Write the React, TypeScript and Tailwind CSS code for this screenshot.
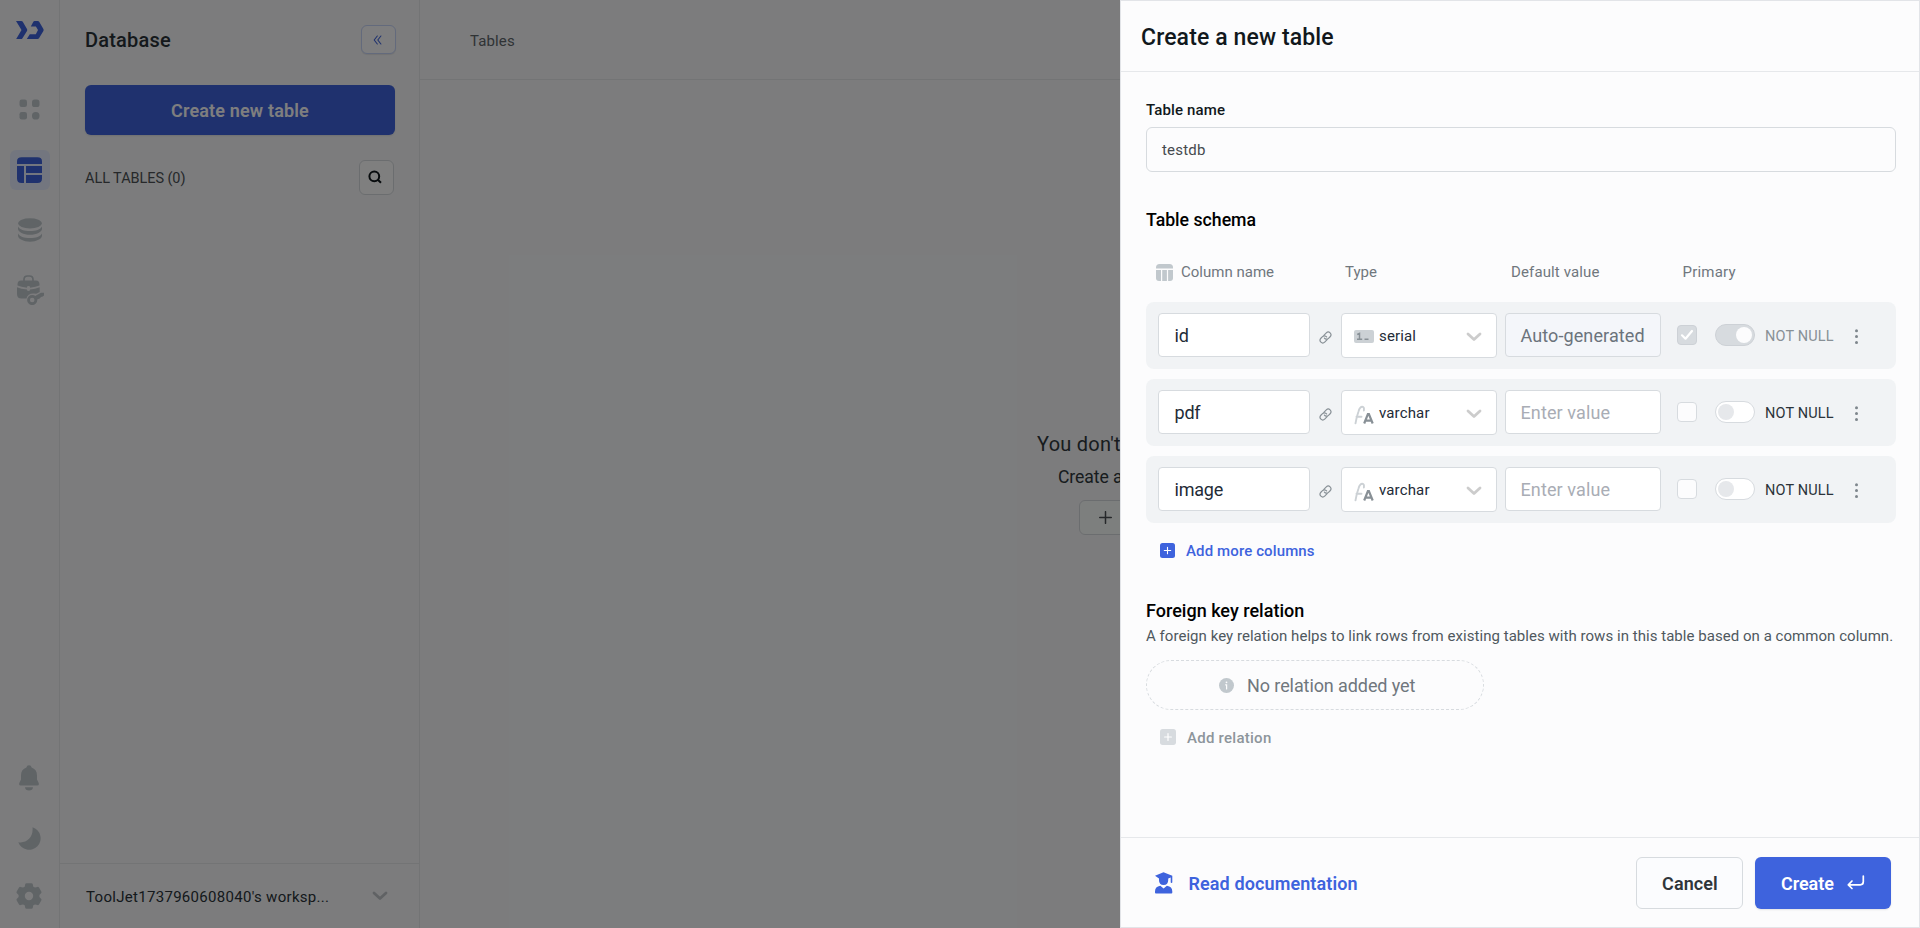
import React from 'react'

type Column = { name: string; type: 'serial' | 'varchar'; primary: boolean }

const columns: Column[] = [
  { name: 'id', type: 'serial', primary: true },
  { name: 'pdf', type: 'varchar', primary: false },
  { name: 'image', type: 'varchar', primary: false },
]

function Logo() {
  return (
    <svg width="28" height="18" viewBox="0 0 28 18" fill="#3e63dd">
      <path d="M0 0h5.3q.8 0 1.3.6L11 8.1q.5.9 0 1.8L6.300 17.400q-.4.600-1.200.600H.200L5.500 9z" />
      <path d="M14.800 5.500L17.200.900q.500-.900 1.400-.900h3.200q.900 0 1.400.800l4.200 7.300q.500.900 0 1.800l-4.400 7.300q-.500.800-1.400.800H10.800l3-4.700h6L22 9.100 19.900 5.500z" />
    </svg>
  )
}

function AppsIcon() {
  return (
    <svg width="21" height="21" viewBox="0 0 21 21" fill="#c1c8cd">
      <rect x="0.500" y="0.500" width="7.500" height="7.500" rx="2.200" />
      <rect x="13" y="0.500" width="7.500" height="7.500" rx="2.600" />
      <rect x="0.500" y="13" width="7.500" height="7.500" rx="2.200" />
      <rect x="13" y="13" width="7.500" height="7.500" rx="3.600" />
    </svg>
  )
}

function TableNavIcon() {
  return (
    <svg width="25" height="26" viewBox="0 0 25 26" fill="#3e63dd">
      <path d="M0 7V4.500Q0 .300 4.500.300h16Q25 .300 25 4.500V7z" />
      <path d="M0 9h7v17H4.500Q0 26 0 21.500z" />
      <path d="M9 9h16v7H9z" />
      <path d="M9 18h16v3.500q0 4.500-4.500 4.500H9z" />
    </svg>
  )
}

function DatabaseNavIcon() {
  return (
    <svg width="24" height="24" viewBox="0 0 24 24" fill="#c1c8cd">
      <ellipse cx="12" cy="5.300" rx="11.800" ry="5.100" />
      <path d="M0 8.500c1.500 2.900 6.200 4.600 12 4.600s10.500-1.700 12-4.600v2.300c0 3.300-5.400 6-12 6S0 14.100 0 10.800z" />
      <path d="M0 15.500c1.500 2.900 6.200 4.600 12 4.600s10.500-1.700 12-4.600v2.100c0 3.400-5.400 6.100-12 6.100S0 21 0 17.600z" />
    </svg>
  )
}

function ConstantsIcon() {
  return (
    <svg width="27" height="30" viewBox="0 0 27 30">
      <path d="M7 6V4.500Q7 1 10.500 1H12.500Q16 1 16 4.500V6" fill="none" stroke="#c1c8cd" strokeWidth="1.700" />
      <path d="M4 5.500h15q3.500 0 3.500 4v1q-3.500 1.500-9.500 2.300v-.8q0-1-1.500-1t-1.500 1v.8Q4 12 .500 10.500v-1q0-4 3.500-4z" fill="#c1c8cd" />
      <path d="M0 12.200q4 1.700 10 2.200v.300q0 1.400 1.500 1.400t1.500-1.400v-.3q5-.4 9.700-2.200v4.800l-3.400 1.800q-8.300-1.500-9.800 4.700H4.500Q0 23.500 0 19z" fill="#c1c8cd" />
      <circle cx="15.200" cy="25" r="3.700" fill="none" stroke="#c1c8cd" strokeWidth="2.800" />
      <path d="M17.200 21.500L24 17.800h3v2.700q-1 1.400-3 1.500l-1.300 1.500-3.200 1.300z" fill="#c1c8cd" />
    </svg>
  )
}

function BellIcon() {
  return (
    <svg width="20" height="26" viewBox="0 0 20 26" fill="#c1c8cd">
      <path d="M10 .300a2.600 2.600 0 0 1 2.600 2.300c3.400 1.100 5.400 3.900 5.400 7.600v4.300l1.600 3.300q1 2.700-1.400 2.700H1.800q-2.400 0-1.400-2.700L2 14.500v-4.300c0-3.700 2-6.500 5.400-7.600A2.600 2.600 0 0 1 10 .300z" />
      <path d="M6 22.200h8q-.3 3.300-4 3.300t-4-3.300z" />
    </svg>
  )
}

function MoonIcon() {
  return (
    <svg width="23" height="23" viewBox="0 0 23 23" fill="#c1c8cd">
      <path d="M14.500.300a11.500 11.500 0 1 1-14.200 14.900c7.900 1.500 15.300-4.500 14.200-14.900z" />
    </svg>
  )
}

function GearIcon() {
  return (
    <svg width="26" height="26" viewBox="0 0 26 26" fill="#c1c8cd">
      <path
        fillRule="evenodd"
        d="M10.500.200h5q1.100 0 1.300 1l.5 2.500 1.700.9 2.400-.7q1-.3 1.600.6l2.300 3.900q.6 1-.2 1.800L23.400 12v2l1.700 1.800q.8.800.2 1.800L23 21.500q-.6.900-1.600.6l-2.400-.7-1.700.9-.5 2.500q-.2 1-1.300 1h-5q-1.100 0-1.300-1l-.5-2.500-1.700-.9-2.400.7q-1 .3-1.600-.6L.700 17.600q-.6-1 .2-1.800L2.600 14v-2L.900 10.200q-.8-.8-.2-1.800L3 4.500q.6-.9 1.600-.6l2.400.7 1.700-.9.5-2.500q.2-1 1.300-1zM13 8.800a4.200 4.200 0 1 0 0 8.400 4.200 4.200 0 0 0 0-8.400z"
      />
    </svg>
  )
}

function ChevronDown({ color }: { color: string }) {
  return (
    <svg width="16" height="10" viewBox="0 0 16 10" fill="none" stroke={color} strokeWidth="2.800" strokeLinecap="round" strokeLinejoin="round">
      <path d="M2 2l6 5.500L14 2" />
    </svg>
  )
}

function LinkIcon() {
  return (
    <svg width="13" height="13" viewBox="0 0 24 24" fill="none" stroke="#889096" strokeWidth="2.200" strokeLinecap="round">
      <path d="M10 13a5 5 0 0 0 7.540.540l3-3a5 5 0 0 0-7.070-7.070l-4.500 4.500" />
      <path d="M14 11a5 5 0 0 0-7.540-.540l-3 3a5 5 0 0 0 7.070 7.070l4.500-4.500" />
    </svg>
  )
}

function SerialIcon() {
  return (
    <svg width="20" height="13" viewBox="0 0 20 13">
      <rect width="20" height="13" rx="2" fill="#ccd1d5" />
      <path d="M3.200 4.500l2.300-1v5.500M3 9.200h5.200M10.500 9.200h4" fill="none" stroke="#889096" strokeWidth="1.500" />
    </svg>
  )
}

function VarcharIcon() {
  return (
    <svg width="20" height="20" viewBox="0 0 20 20" fill="none">
      <path d="M1.500 18.300Q2.500 12 4.500 6.500 5.800 1.700 8.300 1.700q2.100 0 1.600 3.800M2.500 11.700h5" stroke="#ccd1d5" strokeWidth="1.900" strokeLinecap="round" />
      <path d="M10.200 18.500l3.700-9.500h1l3.800 9.500M11.300 15.600h6.200" stroke="#889096" strokeWidth="2.200" />
    </svg>
  )
}

function ColumnsIcon() {
  return (
    <svg width="17" height="17" viewBox="0 0 17 17" fill="#c1c8cd">
      <path d="M0 4.500V3.500Q0 0 3.500 0h10Q17 0 17 3.500v1z" />
      <path d="M0 6h5v11H3q-3 0-3-3z" />
      <path d="M6.200 6h4.700v11H6.200z" />
      <path d="M12.100 6H17v8q0 3-3 3h-1.900z" />
    </svg>
  )
}

function PlusSquare({ color, size = 15 }: { color: string; size?: number }) {
  return (
    <svg width={size} height={size} viewBox="0 0 15 15">
      <rect width="15" height="15" rx="2.500" fill={color} />
      <path d="M7.500 4.300v6.400M4.300 7.500h6.400" stroke="#fff" strokeWidth="1.100" strokeLinecap="round" />
    </svg>
  )
}

function InfoIcon() {
  return (
    <svg width="15" height="15" viewBox="0 0 15 15">
      <circle cx="7.500" cy="7.500" r="7.500" fill="#c1c8cd" />
      <circle cx="7.500" cy="4.300" r="0.900" fill="#fcfcfd" />
      <path d="M6.600 6.800h1v4.200" fill="none" stroke="#fcfcfd" strokeWidth="1.200" strokeLinecap="round" />
    </svg>
  )
}

function StudentIcon() {
  return (
    <svg width="18" height="22" viewBox="0 0 18 22" fill="#3e63dd">
      <path d="M0 3.700L8.500.300 17.300 3.700v6.500q0 .800-.8.800t-.8-.8V5.500l-2.500 1v1.700q0 4.800-4.600 4.800T4 8.200V6.500z" />
      <path d="M5.300 13.700l3.300 2.900 3.300-2.900q5.400.800 5.400 5.800v1.100q0 .900-.9.900H.900q-.9 0-.9-.9v-1.100q0-5 5.300-5.800z" />
    </svg>
  )
}

function ReturnIcon() {
  return (
    <svg width="18" height="15" viewBox="0 0 18 15" fill="none" stroke="#fff" strokeWidth="1.700" strokeLinecap="round" strokeLinejoin="round">
      <path d="M16.300 1v5.800q0 3-3 3H1.700M5 6L1.300 9.800 5 13.500" />
    </svg>
  )
}

function NavRail() {
  return (
    <nav className="flex h-full w-[60px] shrink-0 flex-col items-start border-r border-[#e6e8eb]">
      <div className="mt-[21px] ml-[16px] h-[18px]"><Logo /></div>
      <div className="mt-[60px] ml-[19px] h-[21px]"><AppsIcon /></div>
      <div className="mt-[30px] ml-[10px] flex h-10 w-10 items-center justify-center rounded-md bg-[#e6edfe] pr-[1px]"><TableNavIcon /></div>
      <div className="mt-[28px] ml-[18px] h-[24px]"><DatabaseNavIcon /></div>
      <div className="mt-[33px] ml-[17px] h-[30px]"><ConstantsIcon /></div>
      <div className="mt-auto ml-[19px] h-[26px]"><BellIcon /></div>
      <div className="mt-[36px] ml-[18px] h-[23px]"><MoonIcon /></div>
      <div className="mt-[33px] mb-[19px] ml-[16px] h-[26px]"><GearIcon /></div>
    </nav>
  )
}

function DatabasePanel() {
  return (
    <aside className="flex h-full w-[360px] shrink-0 flex-col border-r border-[#e6e8eb]">
      <div className="mt-[25px] mr-[23px] ml-[25px] flex h-[29px] items-center justify-between">
        <h1 className="text-[20px] font-medium tracking-[0.200px] text-[#2a3338]">Database</h1>
        <button className="flex h-[29px] w-[35px] items-center justify-center rounded-md border border-[#c6d4f9] bg-[#fdfdfe] shadow-[0_1px_1px_rgba(0,0,0,0.080)]">
          <svg width="9" height="10" viewBox="0 0 9 10" fill="none" stroke="#3e63dd" strokeWidth="1.100" strokeLinecap="round" strokeLinejoin="round" className="mr-[3px]">
            <path d="M4.300 1L1.200 5l3.100 4M7.900 1L4.800 5l3.100 4" />
          </svg>
        </button>
      </div>
      <button className="mt-[31px] mr-[24px] ml-[25px] flex h-[50px] items-center justify-center rounded-md bg-[#3e63dd] pt-[1px] text-[18px] font-semibold tracking-[0.160px] text-[#fdfdfe] shadow-[0_1px_2px_rgba(0,0,0,0.100)]">
        Create new table
      </button>
      <div className="mt-[25px] mr-[25px] ml-[25px] flex h-[35px] items-center justify-between">
        <span className="pt-[2px] text-[14.500px] tracking-[-0.070px] text-[#4c5155]">ALL TABLES (0)</span>
        <button className="flex h-[35px] w-[35px] items-center justify-center rounded-md border border-[#d7dbdf] bg-white">
          <svg width="14" height="14" viewBox="0 0 14 14" fill="none" stroke="#11181c" strokeWidth="2" className="-mt-[2px] mr-[3px]">
            <circle cx="6.300" cy="6.300" r="4.900" />
            <path d="M9.800 9.800l3.200 3" />
          </svg>
        </button>
      </div>
      <div className="mt-auto flex h-[65px] items-center border-t border-[#e6e8eb] pr-[31px] pl-[26px]">
        <span className="flex-1 pt-[2px] text-[15px] tracking-[0.300px] whitespace-nowrap text-[#2a3338]">ToolJet1737960608040's worksp...</span>
        <ChevronDown color="#c1c4c8" />
      </div>
    </aside>
  )
}

function TablesPane() {
  return (
    <main className="flex h-full min-w-0 flex-1 flex-col overflow-hidden">
      <header className="flex h-[80px] shrink-0 items-center border-b border-[#e6e8eb] pt-[3px] pl-[50px] text-[15px] tracking-[0.120px] text-[#60666b]">Tables</header>
      <div className="mt-[350px] flex flex-col items-start overflow-hidden whitespace-nowrap text-[#30383d]">
        <p className="ml-[617px] flex h-[28px] items-center text-[20px] tracking-[0.250px]">You don't</p>
        <p className="mt-[7px] ml-[638px] flex h-[24px] items-center text-[17.600px] tracking-[-0.100px]">Create a</p>
        <div className="mt-[11px] ml-[659px] flex h-[35px] w-[120px] shrink-0 items-center rounded-md border border-[#d7dbdf] bg-[#fbfefc] pl-[19px]">
          <svg width="13" height="13" viewBox="0 0 13 13" stroke="#4c5155" strokeWidth="1.500" strokeLinecap="round">
            <path d="M6.500.700v11.600M.700 6.500h11.600" />
          </svg>
        </div>
      </div>
    </main>
  )
}

function ColumnRow({ column }: { column: Column }) {
  const { name, type, primary } = column
  return (
    <div className="flex h-[67px] items-start rounded-lg bg-[#f1f3f5] pt-[11px] pl-[12px]">
      <div className="flex h-[44px] w-[152px] items-center rounded-[4px] border border-[#d7dbdf] bg-white pt-[1px] pl-[15.500px] text-[18px] tracking-[-0.200px] text-[#232b37]">{name}</div>
      <div className="mt-[18px] ml-[9px] h-[13px] w-[13px]"><LinkIcon /></div>
      <div className="ml-[9px] flex h-[45px] w-[156px] items-center rounded-[4px] border border-[#d7dbdf] bg-white pr-[14px] pl-[12px]">
        <div className="flex w-[25px]">{type === 'serial' ? <div className="mt-[2px]"><SerialIcon /></div> : <div className="mt-[4px]"><VarcharIcon /></div>}</div>
        <span className="flex-1 pt-[2px] text-[15px] tracking-[0.150px] text-[#232b37]">{type}</span>
        <div className="mt-[2px]"><ChevronDown color="#cccccc" /></div>
      </div>
      {primary ? (
        <div className="ml-[8px] flex h-[44px] w-[156px] items-center rounded-[4px] border border-[#d7dbdf] bg-[#f4f6fa] pt-[1px] pl-[14.500px] text-[18px] tracking-[0.100px] whitespace-nowrap text-[#6b737c]">Auto-generated</div>
      ) : (
        <div className="ml-[8px] flex h-[44px] w-[156px] items-center rounded-[4px] border border-[#d7dbdf] bg-white pt-[1px] pl-[14.500px] text-[18px] tracking-[0.110px] text-[#a9adb5]">Enter value</div>
      )}
      {primary ? (
        <div className="mt-[12px] ml-[16px] flex h-5 w-5 items-center justify-center rounded-[4px] border border-[#cdd1d6] bg-[#d7dbdf]">
          <svg width="14" height="12" viewBox="0 0 14 12" fill="none" stroke="#fff" strokeWidth="2.200" strokeLinecap="round" strokeLinejoin="round">
            <path d="M2 6.300l3.500 3.400L12 2" />
          </svg>
        </div>
      ) : (
        <div className="mt-[12px] ml-[16px] h-5 w-5 rounded-[4px] border border-[#d7dbdf] bg-[#fcfcfd]" />
      )}
      {primary ? (
        <div className="mt-[11px] ml-[18px] flex h-[22px] w-[40px] items-center justify-end rounded-full border border-[#cdd1d6] bg-[#d7dbdf] pr-[2px]">
          <div className="h-[16px] w-[16px] rounded-full bg-[#fcfcfd]" />
        </div>
      ) : (
        <div className="mt-[11px] ml-[18px] flex h-[22px] w-[40px] items-center rounded-full border border-[#d7dbdf] bg-white pl-[2px]">
          <div className="h-[15.500px] w-[15.500px] rounded-full bg-[#e6e8eb]" />
        </div>
      )}
      <span className={`mt-[13px] ml-[10px] flex h-[22px] w-[79px] items-center text-[14.500px] tracking-[0.140px] whitespace-nowrap ${primary ? 'text-[#889096]' : 'text-[#2b333a]'}`}>NOT NULL</span>
      <svg width="5" height="17" viewBox="0 0 5 17" fill="#7e868c" className="mt-[15px] ml-[10px]">
        <circle cx="2.500" cy="2.700" r="1.500" />
        <circle cx="2.500" cy="8.500" r="1.500" />
        <circle cx="2.500" cy="14.500" r="1.500" />
      </svg>
    </div>
  )
}

function CreateTableDrawer() {
  return (
    <section className="flex h-full w-[800px] shrink-0 flex-col border border-[#e2e4e8] bg-[#fcfcfd]">
      <header className="flex h-[71px] shrink-0 items-center border-b border-[#e6e8eb] pt-[4px] pl-[20px]">
        <h2 className="text-[23px] font-medium tracking-[0.120px] text-[#11181c]">Create a new table</h2>
      </header>
      <div className="flex flex-1 flex-col pr-[23px] pl-[25px]">
        <label className="mt-[28px] flex h-[20px] items-center text-[15px] font-medium tracking-[0.140px] text-[#11181c]">Table name</label>
        <div className="mt-[7px] flex h-[45px] items-center rounded-md border border-[#d7dbdf] pt-[2px] pl-[15px] text-[15px] tracking-[0.200px] text-[#454a4f]">testdb</div>
        <h3 className="mt-[36px] flex h-[24px] items-center text-[17.700px] font-medium text-black">Table schema</h3>
        <div className="mt-[29px] flex h-[22px] items-center text-[15px] text-[#70777d]">
          <div className="flex w-[199px] items-center gap-[8px] pl-[10px] tracking-[0.010px]"><ColumnsIcon />Column name</div>
          <span className="w-[166px] tracking-[0.020px]">Type</span>
          <span className="w-[171.500px] tracking-[0.130px]">Default value</span>
          <span className="tracking-[0.210px]">Primary</span>
        </div>
        <div className="mt-[19px] flex flex-col gap-[10px]">
          {columns.map((c) => <ColumnRow key={c.name} column={c} />)}
        </div>
        <button className="mt-[16px] flex h-[22px] items-center pl-[14px] text-[15px] font-medium tracking-[0.120px] text-[#3e63dd]">
          <PlusSquare color="#3e63dd" /><span className="ml-[11px] pt-[2px]">Add more columns</span>
        </button>
        <h3 className="mt-[37px] flex h-[24px] items-center text-[18px] font-medium tracking-[0.010px] text-black">Foreign key relation</h3>
        <p className="mt-[4px] flex h-[20px] items-center text-[15px] tracking-[0.040px] whitespace-nowrap text-[#4f585e]">
          A foreign key relation helps to link rows from existing tables with rows in this table based on a common column.
        </p>
        <div className="mt-[14px] flex h-[50px] w-[338px] items-center rounded-full border border-dashed border-[#d7dbdf] pl-[72px] text-[18px] tracking-[-0.090px] text-[#70777d]">
          <InfoIcon /><span className="ml-[13px] pt-[1px]">No relation added yet</span>
        </div>
        <button className="mt-[16px] flex h-[22px] items-center pl-[14px] text-[15px] font-medium tracking-[0.260px] text-[#8d959b]">
          <PlusSquare color="#d7dbdf" size={16} /><span className="ml-[11px] pt-[2px]">Add relation</span>
        </button>
      </div>
      <footer className="flex h-[90px] shrink-0 items-center border-t border-[#e6e8eb] pr-[28px] pl-[34px]">
        <StudentIcon />
        <a className="ml-[15.500px] flex-1 pt-[1px] text-[18px] font-semibold tracking-[0.110px] text-[#3e63dd]">Read documentation</a>
        <button className="flex h-[52px] w-[107px] items-center justify-center rounded-md border border-[#d7dbdf] bg-[#fbfcfe] pt-[1px] pl-[1px] text-[18px] font-semibold tracking-[0.090px] text-[#2f353a]">Cancel</button>
        <button className="ml-[12px] flex h-[52px] w-[136px] items-center rounded-md bg-[#3e63dd] pl-[26px] text-[18px] font-semibold tracking-[-0.050px] text-white shadow-[0_1px_2px_rgba(0,0,0,0.100)]">
          <span className="w-[66px] pt-[1px] text-left">Create</span>
          <ReturnIcon />
        </button>
      </footer>
    </section>
  )
}

export default function App() {
  return (
    <div className="flex h-[928px] w-[1920px] overflow-hidden bg-[#f8f9fb] font-['Roboto',sans-serif]">
      <div className="relative flex h-full w-[1120px] shrink-0 overflow-hidden">
        <NavRail />
        <DatabasePanel />
        <TablesPane />
        <div className="pointer-events-none absolute inset-0 bg-black/50" />
      </div>
      <CreateTableDrawer />
    </div>
  )
}
